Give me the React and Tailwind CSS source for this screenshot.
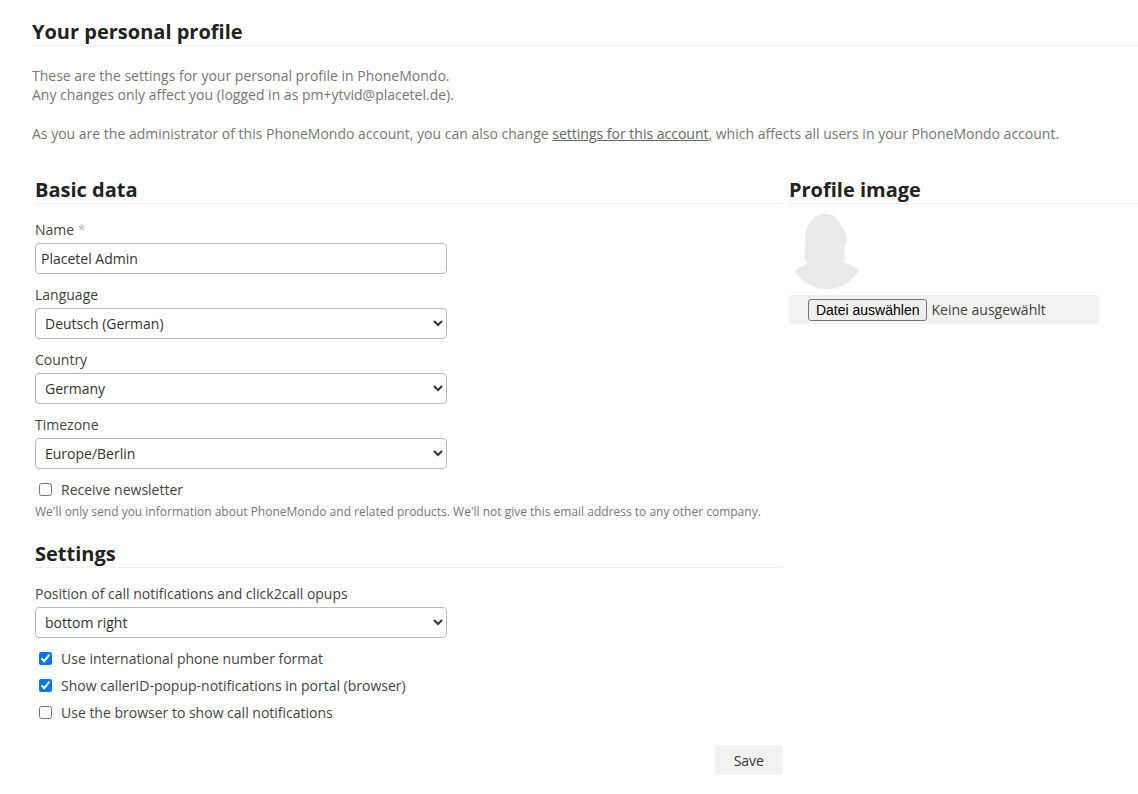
import { useRef, useState } from 'react'

const selectFields = [
  { id: 'language', label: 'Language', options: ['Deutsch (German)', 'English'] },
  { id: 'country', label: 'Country', options: ['Germany', 'Austria', 'Switzerland'] },
  { id: 'timezone', label: 'Timezone', options: ['Europe/Berlin', 'Europe/London', 'Europe/Vienna'] }
]

const positionField = {
  id: 'position',
  label: 'Position of call notifications and click2call opups',
  options: ['bottom right', 'bottom left', 'top right', 'top left']
}

function SectionTitle({ children }) {
  return (
    <h2 className="border-b border-[#f0f0f0] text-[20px] leading-[26px] font-bold text-[#222]">{children}</h2>
  )
}

function SelectField({ field }) {
  return (
    <div className="flex max-w-[412px] flex-col gap-1">
      <label htmlFor={field.id}>{field.label}</label>
      <select id={field.id} className="h-[31px] rounded border border-[#bbb] bg-white px-[5px] text-[#333]">
        {field.options.map((option) => (
          <option key={option}>{option}</option>
        ))}
      </select>
    </div>
  )
}

function CheckField({ id, label, checked = false }) {
  return (
    <div className="flex items-center gap-[9px] pl-1">
      <input id={id} type="checkbox" defaultChecked={checked} className="size-[13px]" />
      <label htmlFor={id}>{label}</label>
    </div>
  )
}

function Avatar() {
  return (
    <svg width="64" height="75" viewBox="0 0 64 75" fill="#e9e9e9" aria-hidden="true">
      <path d="M0 57.5 C3 54 7 52 12.5 49.5 C10 47.5 9.3 45 9.3 42 L9.3 38 C9.8 36 10 35 10 32 L10.3 24 C10.8 9 19 0 30.5 0 C32 0 33 0.8 34.5 0.8 C38 0.8 39 1.8 41 4.5 C45.5 10.5 49.5 16 51.3 22 C52.3 24.5 51.8 27.5 50.8 30 C49.5 32 49.2 34 49.3 37 C49.3 40 50.3 42 50 44.5 C49.6 46.5 48 47 48.7 48 C53.5 50.5 60 52 64 56.5 C57 68 45 75 32 75 C18 75 7 68 0 57.5 Z" />
    </svg>
  )
}

function ImageUpload() {
  const fileInput = useRef(null)
  const [fileName, setFileName] = useState('')

  return (
    <div className="flex h-[29px] max-w-[310px] items-center gap-1 rounded bg-[#f2f2f2] pl-[19px]">
      <input
        ref={fileInput}
        type="file"
        accept="image/*"
        aria-label="Profile image"
        className="hidden"
        onChange={(e) => setFileName(e.target.files[0]?.name || '')}
      />
      <button
        type="button"
        onClick={() => fileInput.current.click()}
        className="h-[22px] rounded-[3px] border border-[#767676] bg-[#efefef] px-[7px] font-['Liberation_Sans',Arial,sans-serif] leading-5 text-black"
      >
        Datei auswählen
      </button>
      <span>{fileName || 'Keine ausgewählt'}</span>
    </div>
  )
}

export default function App() {
  return (
    <main className="bg-white pt-[19px] pb-[18px] pl-8 font-['Open_Sans',sans-serif] text-[14px] leading-[19px] text-[#444]">
      <h1 className="border-b border-[#f0f0f0] text-[20px] leading-[26px] font-bold text-[#222]">Your personal profile</h1>

      <div className="mt-5 space-y-5 text-[#777]">
        <p>
          These are the settings for your personal profile in PhoneMondo.
          <br />
          Any changes only affect you (logged in as pm+ytvid@placetel.de).
        </p>
        <p>
          As you are the administrator of this PhoneMondo account, you can also change{' '}
          <a href="#account" className="text-[#666] underline">settings for this account</a>, which affects all users in your PhoneMondo account.
        </p>
      </div>

      <form className="mt-[34px] grid grid-cols-[15fr_7fr] gap-[6px] pl-[3px]" onSubmit={(e) => e.preventDefault()}>
        <div>
          <SectionTitle>Basic data</SectionTitle>
          <div className="mt-4 flex flex-col gap-[11px]">
            <div className="flex max-w-[412px] flex-col gap-1">
              <label htmlFor="name">
                Name <span className="text-[#bbb]">*</span>
              </label>
              <input
                id="name"
                type="text"
                defaultValue="Placetel Admin"
                className="h-[31px] rounded border border-[#bbb] px-[5px] text-[#333]"
              />
            </div>
            {selectFields.map((field) => (
              <SelectField key={field.id} field={field} />
            ))}
            <CheckField id="newsletter" label="Receive newsletter" />
          </div>
          <p className="mt-[5px] mb-[21px] text-[12px] leading-4 text-[#777]">
            We'll only send you information about PhoneMondo and related products. We'll not give this email address to any other company.
          </p>

          <SectionTitle>Settings</SectionTitle>
          <div className="mt-4 mb-[11px]">
            <SelectField field={positionField} />
          </div>
          <div className="flex flex-col gap-2">
            <CheckField id="international" label="Use international phone number format" checked />
            <CheckField id="popups" label="Show callerID-popup-notifications in portal (browser)" checked />
            <CheckField id="browser" label="Use the browser to show call notifications" />
          </div>

          <div className="mt-[23px] flex justify-end">
            <button type="submit" className="h-[30px] rounded bg-[#f2f2f2] px-[19px] text-[#333]">Save</button>
          </div>
        </div>

        <div>
          <SectionTitle>Profile image</SectionTitle>
          <div className="mt-[10px] mb-[6px] pl-[6px]">
            <Avatar />
          </div>
          <ImageUpload />
        </div>
      </form>
    </main>
  )
}
